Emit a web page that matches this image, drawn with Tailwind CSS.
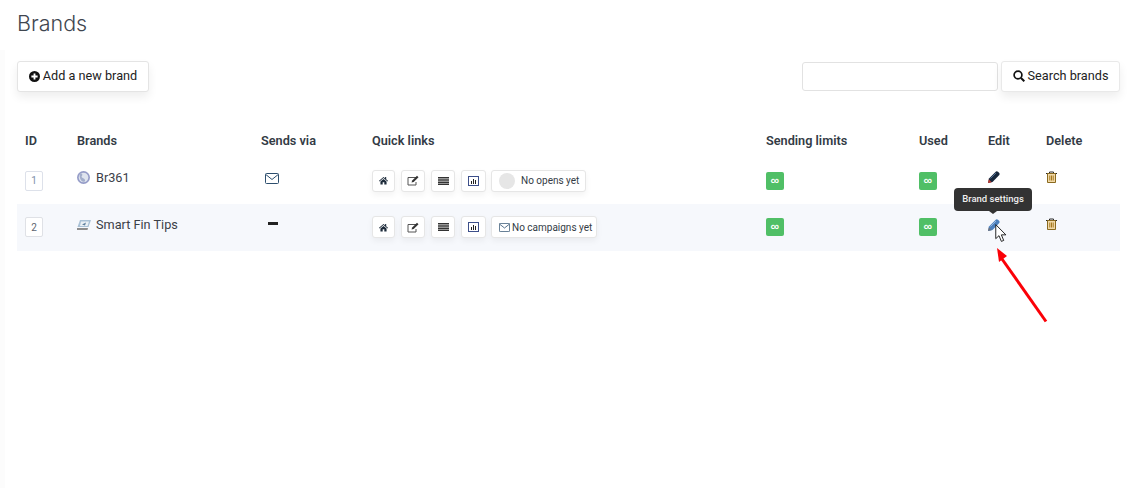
<!DOCTYPE html>
<html>
<head>
    <meta charset="utf-8" />
    <script src="https://cdn.jsdelivr.net/npm/@tailwindcss/browser@4"></script>
    <title>Brands</title>
</head>
<body class="bg-white font-['Roboto',sans-serif] text-[#333b45]">
    <div class="relative h-[488px] w-[1132px] overflow-hidden pl-[17px] pr-[12px] pt-[10px]">

        <div class="absolute bottom-0 left-0 top-[50px] w-[5px] bg-[#fcfcfc]"></div>

        <h1 class="h-[27px] font-['Inter',sans-serif] text-[21.500px] font-light leading-[27px] text-[#3f4650]">Brands</h1>

        <div class="mt-[24px] flex items-center justify-between">
            <button class="flex h-[31px] w-[132px] items-center justify-center gap-[3px] rounded-[3px] border border-[#e4e4e4] bg-white pb-[1px] text-[12.700px] text-[#222] shadow-[0_5px_10px_rgba(0,0,0,0.07)]">
                <svg class="h-[11px] w-[11px]" viewBox="0 0 12 12"><circle cx="6" cy="6" r="6" fill="#111"/><path d="M6 2.600v6.800M2.600 6h6.800" stroke="#fff" stroke-width="2"/></svg>
                Add a new brand
            </button>
            <div class="flex items-center gap-[3px]">
                <input class="h-[29px] w-[196px] rounded-[3px] border border-[#e2e2e2] bg-white" />
                <button class="flex h-[31px] w-[119px] items-center justify-center gap-[3px] rounded-[3px] border border-[#e9e9e9] bg-white pb-[1px] text-[12.700px] text-[#222] shadow-[0_5px_10px_rgba(0,0,0,0.07)]">
                    <svg class="h-[12px] w-[12px]" viewBox="0 0 12 12" fill="none" stroke="#111" stroke-width="1.700"><circle cx="5" cy="5" r="3.900"/><path d="M8 8l3.300 3.300" stroke-width="2"/></svg>
                    Search brands
                </button>
            </div>
        </div>

        <table class="mt-[32px] w-[1103px] table-fixed border-collapse text-left text-[12.700px]">
            <thead>
                <tr class="h-[33px] text-[#333b45]">
                    <th class="w-[52px] px-2 font-semibold">ID</th>
                    <th class="w-[184px] px-2 font-semibold">Brands</th>
                    <th class="w-[111px] px-2 font-semibold">Sends via</th>
                    <th class="w-[394px] px-2 font-semibold">Quick links</th>
                    <th class="w-[153px] px-2 font-semibold">Sending limits</th>
                    <th class="w-[69px] px-2 font-semibold">Used</th>
                    <th class="w-[58px] px-2 font-semibold">Edit</th>
                    <th class="w-[82px] px-2 font-semibold">Delete</th>
                </tr>
            </thead>
            <tbody>
                <tr class="h-[47px]">
                    <td class="px-2"><span class="flex h-[20px] w-[18px] items-center justify-center rounded-[2px] border border-[#dde1ea] text-[10px] text-[#7d8fa8]">1</span></td>
                    <td class="px-2 pb-[6px]">
                        <div class="flex items-center gap-[6px]">
                            <svg class="h-[13px] w-[13px]" viewBox="0 0 13 13"><circle cx="6.500" cy="6.500" r="6.500" fill="#959cc8"/><circle cx="6.500" cy="6.500" r="4.800" fill="#dfe4ee"/><path d="M3 2.800c1.500-.5 2.500 0 2.300 1.200S4 5.500 5 6.500s2.500 1 3 2.500-1 2-2 1.800C3.500 10 1.800 5 3 2.800z" fill="#a3aecb"/></svg>
                            <span class="text-[#3b4048]">Br361</span>
                        </div>
                    </td>
                    <td class="px-2 pb-[5px]">
                        <svg class="ml-[4px] h-[11px] w-[14px]" viewBox="0 0 14 11" fill="none" stroke="#2d4f6e" stroke-width="1"><rect x=".5" y=".5" width="13" height="10" rx="1"/><path d="M.8 1.500L7 6.500l6.200-5"/></svg>
                    </td>
                    <td class="px-2">
                        <div class="flex items-center">
                            <span class="flex h-[22px] w-[23px] items-center justify-center rounded-[3px] border border-[#e6e6e6] bg-white shadow-[0_3px_6px_rgba(0,0,0,0.05)]">
                                <svg class="h-[9px] w-[9px]" viewBox="0 0 10 10"><path d="M5 1L0 5.300l.6.700L5 2.300 9.400 6l.6-.7-2-1.700V1.200H6.800v1.300zM1.600 6v3.500h2.500V7h1.800v2.500h2.500V6L5 3.200z" fill="#1c2a3a"/></svg>
                            </span>
                            <span class="ml-[6px] flex h-[22px] w-[24px] items-center justify-center rounded-[3px] border border-[#e6e6e6] bg-white shadow-[0_3px_6px_rgba(0,0,0,0.05)]">
                                <svg class="h-[11px] w-[12px]" viewBox="0 0 12 11" fill="none"><path d="M9 2.500H1v7.500h8V7" stroke="#555" stroke-width="1"/><path d="M4.500 7.500L5.200 5.500 10 .8l1.500 1.500-4.800 4.700z" fill="#333"/></svg>
                            </span>
                            <span class="ml-[6px] flex h-[22px] w-[24px] items-center justify-center rounded-[3px] border border-[#e6e6e6] bg-white shadow-[0_3px_6px_rgba(0,0,0,0.05)]">
                                <svg class="h-[8px] w-[11px]" viewBox="0 0 11 8"><path d="M0 0h11v1.500H0zM0 2.200h11v1.500H0zM0 4.400h11v1.500H0zM0 6.500h11V8H0z" fill="#333"/></svg>
                            </span>
                            <span class="ml-[6px] flex h-[22px] w-[25px] items-center justify-center rounded-[3px] border border-[#e6e6e6] bg-white shadow-[0_3px_6px_rgba(0,0,0,0.05)]">
                                <svg class="h-[10px] w-[11px]" viewBox="0 0 11 10" fill="none"><rect x=".5" y=".5" width="10" height="9" stroke="#3d4f8a"/><path d="M3 5h1v3H3zM5 3h1v5H5zM7 4h1v4H7z" fill="#222"/></svg>
                            </span>
                            <span class="ml-[5px] flex h-[22px] w-[95px] items-center rounded-[3px] border border-[#e6e6e6] bg-white pl-[7px] text-[10px] text-[#333b45] shadow-[0_3px_6px_rgba(0,0,0,0.05)]">
                                <span class="h-[16px] w-[16px] rounded-full bg-[#e6e6e6]"></span>
                                <span class="ml-[6px]">No opens yet</span>
                            </span>
                        </div>
                    </td>
                    <td class="px-2"><span class="flex h-[18px] w-[18px] items-center justify-center rounded-[2px] bg-[#50bf66] text-[8px] font-bold leading-none text-white">∞</span></td>
                    <td class="px-2"><span class="flex h-[18px] w-[18px] items-center justify-center rounded-[2px] bg-[#50bf66] text-[8px] font-bold leading-none text-white">∞</span></td>
                    <td class="px-2 pb-[7px]">
                        <svg class="h-[12px] w-[12px]" viewBox="0 0 12 12"><path d="M0 12L1 7.500 8 .5Q9 0 10 .8L11.300 2Q12 3 11.300 4L4.500 11z" fill="#16263a"/><path d="M0 12L.8 8.300 3.700 11.200z" fill="#c0392f"/><path d="M2.500 7.500L8 2" stroke="#5b7fa8" stroke-width=".8"/></svg>
                    </td>
                    <td class="px-2 pb-[7px]">
                        <svg class="h-[12px] w-[11px]" viewBox="0 0 11 12" fill="none"><path d="M0 2.500h11M3.500 2.500V1h4v1.500" stroke="#2a2a2a"/><path d="M1.500 2.500h8v9h-8z" fill="#f1d9a8" stroke="#8a6a1f"/><path d="M3.800 4.500v5M5.500 4.500v5M7.200 4.500v5" stroke="#a5781f"/></svg>
                    </td>
                </tr>
                <tr class="h-[47px] bg-[#f6f8fc]">
                    <td class="px-2 pb-[1px]"><span class="flex h-[20px] w-[18px] items-center justify-center rounded-[2px] border border-[#dfe1e6] bg-white text-[10px] text-[#5c6470]">2</span></td>
                    <td class="px-2 pb-[5px]">
                        <div class="flex items-center gap-[5px]">
                            <svg class="h-[10px] w-[14px]" viewBox="0 0 14 10"><path d="M3 0h11l-2.500 7H.5z" fill="#a9c1d6"/><path d="M4 1.500h8L10.500 6H3z" fill="#eaf0f5"/><path d="M0 8h11l-.5 2H0z" fill="#8d8d8d"/><path d="M5 4.500l4-2-1 3z" fill="#5e7f9e"/></svg>
                            <span class="text-[#3b4048]">Smart Fin Tips</span>
                        </div>
                    </td>
                    <td class="px-2 pb-[9px]"><span class="ml-[7px] block h-[3px] w-[10px] bg-[#222]"></span></td>
                    <td class="px-2 pb-[1px]">
                        <div class="flex items-center">
                            <span class="flex h-[22px] w-[23px] items-center justify-center rounded-[3px] border border-[#e6e6e6] bg-white shadow-[0_3px_6px_rgba(0,0,0,0.05)]">
                                <svg class="h-[9px] w-[9px]" viewBox="0 0 10 10"><path d="M5 1L0 5.300l.6.700L5 2.300 9.400 6l.6-.7-2-1.700V1.200H6.800v1.300zM1.600 6v3.500h2.500V7h1.800v2.500h2.500V6L5 3.200z" fill="#1c2a3a"/></svg>
                            </span>
                            <span class="ml-[6px] flex h-[22px] w-[24px] items-center justify-center rounded-[3px] border border-[#e6e6e6] bg-white shadow-[0_3px_6px_rgba(0,0,0,0.05)]">
                                <svg class="h-[11px] w-[12px]" viewBox="0 0 12 11" fill="none"><path d="M9 2.500H1v7.500h8V7" stroke="#555" stroke-width="1"/><path d="M4.500 7.500L5.200 5.500 10 .8l1.500 1.500-4.800 4.700z" fill="#333"/></svg>
                            </span>
                            <span class="ml-[6px] flex h-[22px] w-[24px] items-center justify-center rounded-[3px] border border-[#e6e6e6] bg-white shadow-[0_3px_6px_rgba(0,0,0,0.05)]">
                                <svg class="h-[8px] w-[11px]" viewBox="0 0 11 8"><path d="M0 0h11v1.500H0zM0 2.200h11v1.500H0zM0 4.400h11v1.500H0zM0 6.500h11V8H0z" fill="#333"/></svg>
                            </span>
                            <span class="ml-[6px] flex h-[22px] w-[25px] items-center justify-center rounded-[3px] border border-[#e6e6e6] bg-white shadow-[0_3px_6px_rgba(0,0,0,0.05)]">
                                <svg class="h-[10px] w-[11px]" viewBox="0 0 11 10" fill="none"><rect x=".5" y=".5" width="10" height="9" stroke="#3d4f8a"/><path d="M3 5h1v3H3zM5 3h1v5H5zM7 4h1v4H7z" fill="#222"/></svg>
                            </span>
                            <span class="ml-[5px] flex h-[22px] w-[106px] items-center rounded-[3px] border border-[#e6e6e6] bg-white pl-[7px] text-[10px] text-[#333b45] shadow-[0_3px_6px_rgba(0,0,0,0.05)]">
                                <svg class="h-[9px] w-[11px]" viewBox="0 0 11 9" fill="none" stroke="#2d4f6e" stroke-width=".8"><rect x=".4" y=".4" width="10.200" height="8.200" rx=".8"/><path d="M.7 1.200L5.500 5l4.800-3.800"/></svg>
                                <span class="ml-[2px]">No campaigns yet</span>
                            </span>
                        </div>
                    </td>
                    <td class="px-2 pb-[1px]"><span class="flex h-[18px] w-[18px] items-center justify-center rounded-[2px] bg-[#50bf66] text-[8px] font-bold leading-none text-white">∞</span></td>
                    <td class="px-2 pb-[1px]"><span class="flex h-[18px] w-[18px] items-center justify-center rounded-[2px] bg-[#50bf66] text-[8px] font-bold leading-none text-white">∞</span></td>
                    <td class="px-2 pb-[5px]">
                        <svg class="h-[12px] w-[12px]" viewBox="0 0 12 12"><path d="M0 12L1 7.500 8 .5Q9 0 10 .8L11.300 2Q12 3 11.300 4L4.500 11z" fill="#4c80bd"/><path d="M0 12L.8 8.300 3.700 11.200z" fill="#6b7280"/><path d="M2.500 7.500L8 2" stroke="#a8c4e4" stroke-width=".8"/></svg>
                    </td>
                    <td class="px-2 pb-[7px]">
                        <svg class="h-[12px] w-[11px]" viewBox="0 0 11 12" fill="none"><path d="M0 2.500h11M3.500 2.500V1h4v1.500" stroke="#2a2a2a"/><path d="M1.500 2.500h8v9h-8z" fill="#f1d9a8" stroke="#8a6a1f"/><path d="M3.800 4.500v5M5.500 4.500v5M7.200 4.500v5" stroke="#a5781f"/></svg>
                    </td>
                </tr>
            </tbody>
        </table>

        <!-- tooltip over the edit icon -->
        <div class="absolute left-[954px] top-[188px] flex h-[23px] w-[78px] items-center justify-center rounded-[4px] bg-[#333] text-[9.500px] font-medium text-[#eee]">
            Brand settings
            <span class="absolute bottom-[-3px] left-[35px] h-0 w-0 border-x-[4px] border-t-[3px] border-x-transparent border-t-[#333]"></span>
        </div>

        <!-- mouse cursor -->
        <svg class="absolute left-[995px] top-[224px] h-[19px] w-[12px]" viewBox="0 0 13 21"><path d="M.7.700v15.500l3.600-3.300 2.600 6.300 2.600-1-2.600-6.200h5z" fill="#fff" stroke="#111" stroke-width="1"/></svg>

        <!-- red arrow annotation -->
        <svg class="absolute left-[990px] top-[245px] h-[80px] w-[60px]" viewBox="0 0 60 80"><path d="M56 76.500L12 14" stroke="#fb0007" stroke-width="3"/><path d="M7 3l10 8-8 6z" fill="#fb0007"/></svg>
    </div>
</body>
</html>
